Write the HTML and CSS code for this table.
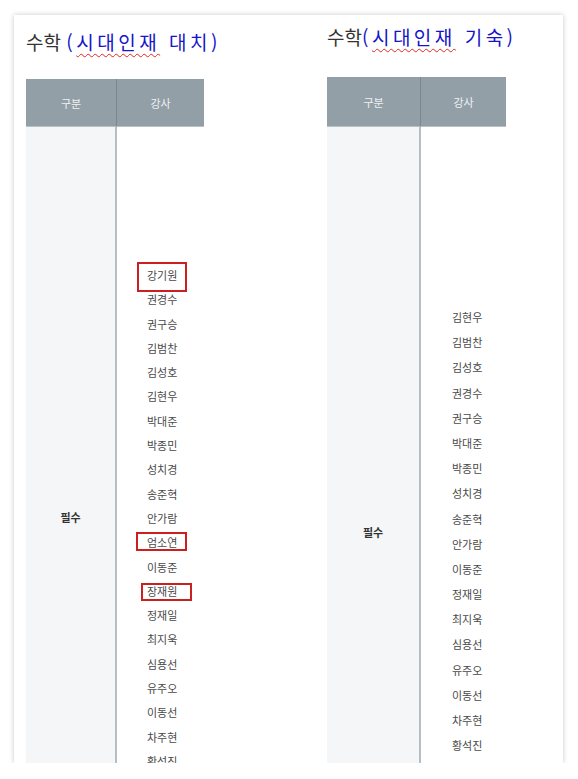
FILE: index.html
```html
<!DOCTYPE html>
<html lang="ko">
<head>
<meta charset="utf-8">
<title>수학 강사</title>
<link rel="stylesheet" href="styles.css">
</head>
<body>
<div class="page">
  <div class="card">
    <section class="col col-a">
      <h2 class="title">수학 <span class="blue">(<span class="spell">시대인재</span> 대치)</span></h2>
      <div class="tbl tbl-a">
        <div class="th th-first">구분</div>
        <div class="th">강사</div>
        <div class="td-label">필수</div>
        <ul class="names names-a">
          <li>강기원</li><li>권경수</li><li>권구승</li><li>김범찬</li><li>김성호</li><li>김현우</li><li>박대준</li><li>박종민</li><li>성치경</li><li>송준혁</li><li>안가람</li><li>엄소연</li><li>이동준</li><li>장재원</li><li>정재일</li><li>최지욱</li><li>심용선</li><li>유주오</li><li>이동선</li><li>차주현</li><li>황석진</li>
        </ul>
      </div>
    </section>
    <section class="col col-b">
      <h2 class="title">수학<span class="blue">(<span class="spell">시대인재</span> 기숙)</span></h2>
      <div class="tbl tbl-b">
        <div class="th th-first">구분</div>
        <div class="th">강사</div>
        <div class="td-label">필수</div>
        <ul class="names names-b">
          <li>김현우</li><li>김범찬</li><li>김성호</li><li>권경수</li><li>권구승</li><li>박대준</li><li>박종민</li><li>성치경</li><li>송준혁</li><li>안가람</li><li>이동준</li><li>정재일</li><li>최지욱</li><li>심용선</li><li>유주오</li><li>이동선</li><li>차주현</li><li>황석진</li>
        </ul>
      </div>
    </section>
    <div class="mark mark-1"></div>
    <div class="mark mark-2"></div>
    <div class="mark mark-3"></div>
  </div>
</div>
</body>
</html>
```
FILE: styles.css
```css
html, body {
  margin: 0;
  padding: 0;
  background: #ffffff;
}
body {
  font-family: "Noto Sans CJK KR", "Noto Sans", sans-serif;
  color: #333;
}
.page {
  padding: 15px 0 0 14px;
}
.card {
  position: relative;
  box-sizing: border-box;
  width: 549px;
  height: 748px;
  overflow: hidden;
  background: #fff;
  box-shadow: 0 0 5px rgba(0, 0, 0, 0.22);
  display: flex;
  padding-left: 12px;
}
.col {
  display: flex;
  flex-direction: column;
}
.col-a {
  width: 301px;
  padding-top: 13px;
}
.col-b {
  padding-top: 8px;
}
.title {
  margin: 0;
  font-size: 19px;
  font-weight: 400;
  line-height: 28px;
  height: 28px;
  color: #333;
  white-space: nowrap;
}
.blue {
  color: #1515c8;
  letter-spacing: 3.5px;
}
.spell {
  text-decoration: underline wavy #e0281e;
  text-decoration-thickness: 1px;
  text-underline-offset: 3px;
}
.tbl {
  display: grid;
  font-size: 11px;
}
.tbl-a {
  margin-top: 23px;
  grid-template-columns: 91px 87px;
}
.tbl-b {
  margin-top: 26px;
  grid-template-columns: 94px 85px;
}
.th {
  height: 48px;
  box-sizing: border-box;
  background: #939fa6;
  color: #eef1f3;
  display: flex;
  align-items: center;
  justify-content: center;
  border-bottom: 1px solid #b9c1c5;
}
.tbl-b .th {
  height: 50px;
}
.th-first {
  border-right: 1px solid #7d888e;
}
.td-label {
  background: #f4f6f8;
  border-right: 2px solid #b7bec1;
  display: flex;
  align-items: center;
  justify-content: center;
  font-weight: 700;
  color: #333;
}
.names {
  list-style: none;
  margin: 0;
  color: #4a4a4a;
}
.names li {
  white-space: nowrap;
}
.names-a {
  padding: 136px 0 134px 30px;
}
.names-a li {
  height: 24.3px;
  line-height: 24.3px;
}
.names-b {
  padding: 178px 0 178px 31px;
}
.names-b li {
  height: 25.2px;
  line-height: 25.2px;
}
.mark {
  position: absolute;
  box-sizing: border-box;
  border: 2px solid #cc1f1f;
}
.mark-1 {
  left: 123px;
  top: 247px;
  width: 50px;
  height: 30px;
}
.mark-2 {
  left: 122px;
  top: 517px;
  width: 51px;
  height: 19px;
}
.mark-3 {
  left: 127px;
  top: 568px;
  width: 51px;
  height: 18px;
}
```
